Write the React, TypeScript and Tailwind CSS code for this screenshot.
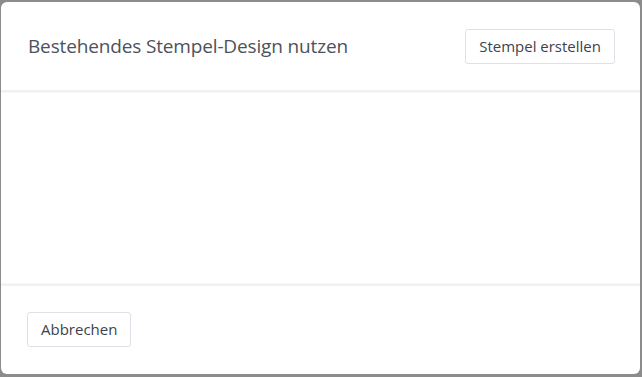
export default function App() {
  return (
    <div className="w-[642px] h-[377px] bg-[#8c8c8c] pl-px pt-[2px] pr-[2px] pb-[3px]" style={{ fontFamily: '"Open Sans", "Noto Sans", sans-serif' }}>
      <div className="h-full bg-white rounded-[6px] flex flex-col overflow-hidden">
        <div className="h-[88px] flex items-center justify-between pl-[27px] pr-[25px] shrink-0">
          <h1 className="text-[19px] text-[#4d525b] tracking-[-0.15px]">Bestehendes Stempel-Design nutzen</h1>
          <button className="h-[35px] px-[13px] border border-[#dde1e8] rounded-[3px] text-[15px] text-[#3e434b] bg-white">Stempel erstellen</button>
        </div>
        <div className="h-[3px] bg-gradient-to-b from-[#eceef0] to-[#f7f8f9]" />
        <div className="flex-1" />
        <div className="h-[3px] bg-gradient-to-b from-[#f7f8f9] to-[#eceef0]" />
        <div className="h-[88px] flex items-center pl-[26px] shrink-0 pb-[2px]">
          <button className="h-[35px] px-[13px] border border-[#dde1e8] rounded-[3px] text-[15px] text-[#3e434b] bg-white">Abbrechen</button>
        </div>
      </div>
    </div>
  );
}
